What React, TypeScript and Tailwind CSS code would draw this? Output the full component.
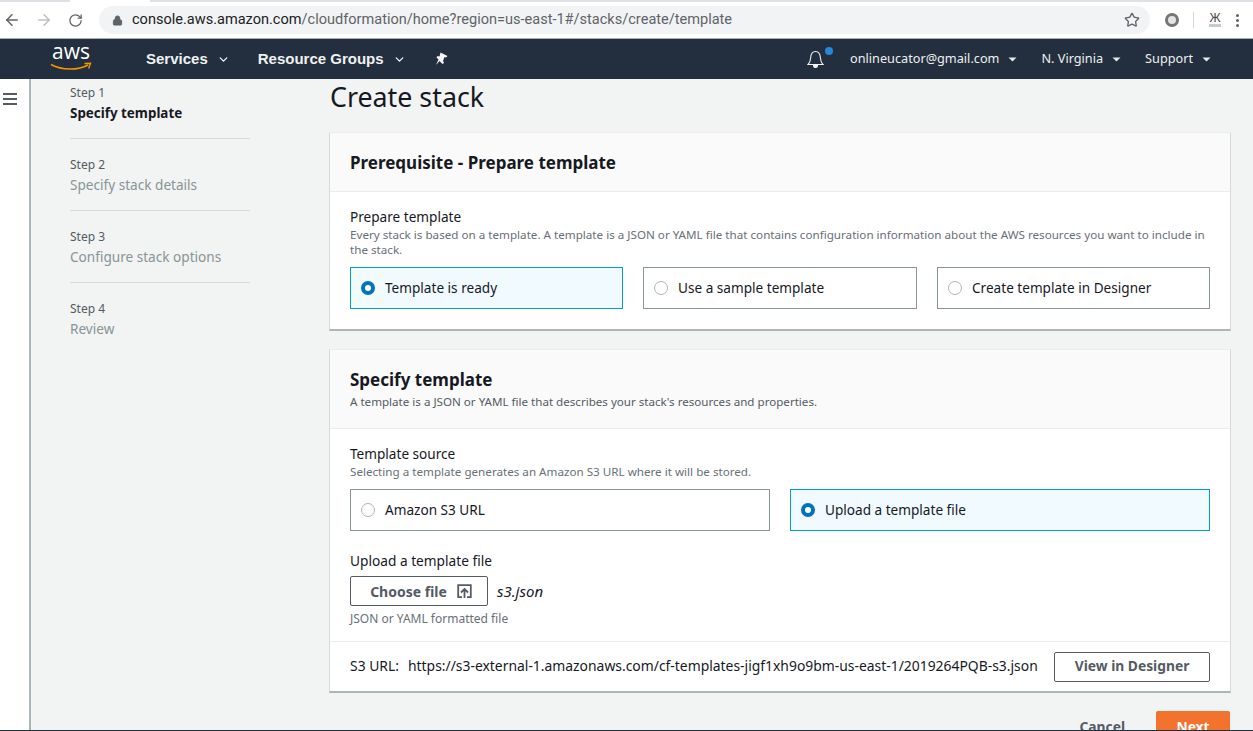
import React from 'react'
import { ChevronDown, Lock, Star, ArrowLeft, ArrowRight, RotateCw } from 'lucide-react'

const font = "font-['Noto_Sans',sans-serif]"

const steps = [
  { step: 'Step 1', title: 'Specify template', active: true },
  { step: 'Step 2', title: 'Specify stack details', active: false },
  { step: 'Step 3', title: 'Configure stack options', active: false },
  { step: 'Step 4', title: 'Review', active: false },
]

const Caret = () => (
  <svg width="9" height="5" viewBox="0 0 9 5" className="ml-[9px] mt-[1px]">
    <path d="M0.5 0.5h8L4.5 4.5z" fill="#e8eaea" />
  </svg>
)

const AwsLogo = () => (
  <div className="relative w-[42px] h-[30px]">
    <div className="absolute left-0 top-[-6px] w-[42px] text-center text-[21px] leading-[26px] text-white font-['Open_Sans',sans-serif]">aws</div>
    <svg width="42" height="10" viewBox="0 0 42 10" className="absolute left-0 top-[18px]" fill="none">
      <path d="M1 2.5C12 8.5 28 8.5 38 3" stroke="#f79400" strokeWidth="1.6" />
      <path d="M34.5 1.5L40.5 1.2L38.6 6.5" stroke="#f79400" strokeWidth="1.4" />
    </svg>
  </div>
)

const BrowserBar = () => (
  <div className="h-[38px] bg-white flex flex-col shrink-0">
    <div className="h-[2px] bg-[#dee1e6] flex">
      <div className="ml-[70px] w-[80px] h-[2px] bg-white" />
    </div>
    <div className="flex items-center h-[36px]">
      <ArrowLeft size={18} color="#5f6368" className="ml-[3px]" />
      <ArrowRight size={18} color="#bdc1c6" className="ml-[14px]" />
      <RotateCw size={15} color="#5f6368" className="ml-[15px]" />
      <div className="ml-[16px] w-[1051px] h-[28px] bg-[#f1f3f4] rounded-full flex items-center pl-[13px] pr-[10px] font-['Roboto',sans-serif] text-[14.55px]">
        <Lock size={11} color="#5f6368" fill="#5f6368" />
        <span className="ml-[9px] text-[#202124]">console.aws.amazon.com</span>
        <span className="text-[#5f6368]">/cloudformation/home?region=us-east-1#/stacks/create/template</span>
        <Star size={16} color="#5f6368" className="ml-auto" />
      </div>
      <div className="ml-[15px] w-[14px] h-[14px] rounded-full bg-[#e4e4e4] border-[3px] border-[#767676] shrink-0" />
      <div className="ml-[14px] w-px h-[16px] bg-[#d5d7da] shrink-0" />
      <div className="ml-[15px] w-[12px] flex flex-col items-center shrink-0">
        <div className="text-[12px] leading-[11px] text-[#444] font-['Liberation_Sans',sans-serif]">Ж</div>
        <div className="w-[12px] h-[3px] bg-[#c9cbcb]" />
      </div>
      <div className="ml-[15px] flex flex-col gap-[2px] shrink-0">
        <div className="w-[3px] h-[3px] rounded-full bg-[#5f6368]" />
        <div className="w-[3px] h-[3px] rounded-full bg-[#5f6368]" />
        <div className="w-[3px] h-[3px] rounded-full bg-[#5f6368]" />
      </div>
    </div>
  </div>
)

const NavBar = () => (
  <div className="h-[41px] bg-[#232f3e] border-t border-[#a9adb2] flex items-center shrink-0">
    <div className="ml-[50px]"><AwsLogo /></div>
    <div className="ml-[54px] flex items-center font-['Liberation_Sans',sans-serif] font-bold text-[15px] text-[#f0f1f1]">
      <span>Services</span>
      <ChevronDown size={13} strokeWidth={2.5} className="ml-[9px]" />
      <span className="ml-[28px]">Resource Groups</span>
      <ChevronDown size={13} strokeWidth={2.5} className="ml-[9px]" />
      <svg width="13" height="14" viewBox="0 0 13 14" className="ml-[29px]">
        <path d="M5.5 0.5L12.5 4L11 5.5L9.5 5L8 9L9 11L7.5 12L4.5 9L1 13L3.5 7.5L1.5 5.5L2.5 4L4.5 4.5z" fill="#f4f5f5" />
      </svg>
    </div>
    <div className={`ml-auto flex items-center text-[12.7px] text-[#eef0f0] ${font}`}>
      <div className="relative w-[17px] h-[18px]">
        <svg width="17" height="18" viewBox="0 0 17 18" fill="none" stroke="#f2f3f3" strokeWidth="1.1">
          <path d="M1 14.5h15c-2-2-2.4-3.5-2.6-6.5C13.2 4.5 11.5 1.5 8.5 1.5S3.8 4.5 3.6 8C3.4 11 3 12.5 1 14.5z" />
          <path d="M6.5 15.5a2 2 0 0 0 4 0z" fill="#f2f3f3" />
        </svg>
        <div className="absolute right-[-9px] top-[-3px] w-[8px] h-[8px] rounded-full bg-[#2a86d8]" />
      </div>
      <span className="ml-[26px]">onlineucator@gmail.com</span>
      <Caret />
      <span className="ml-[24px]">N. Virginia</span>
      <Caret />
      <span className="ml-[24px]">Support</span>
      <span className="mr-[42px] flex"><Caret /></span>
    </div>
  </div>
)

const Sidebar = () => (
  <div className="w-[31px] bg-white border-r-[2px] border-[#aab7b8] shrink-0 pl-[3px] pt-[14px] flex flex-col gap-[3px]">
    <div className="w-[14px] h-[2px] bg-[#545b64]" />
    <div className="w-[14px] h-[2px] bg-[#545b64]" />
    <div className="w-[14px] h-[2px] bg-[#545b64]" />
  </div>
)

const Steps = () => (
  <div className="w-[180px] ml-[39px] shrink-0 pt-[6px]">
    {steps.map((s, i) => (
      <div key={s.step} className={i === 0 ? '' : 'mt-[18px]'}>
        <div className="text-[12px] leading-[16px] text-[#545b64]">{s.step}</div>
        <div className={`leading-[20px] mt-[2px] ${s.active ? 'text-[13.4px] font-bold text-[#16191f]' : 'text-[13.6px] text-[#879596]'}`}>{s.title}</div>
        {i < steps.length - 1 && <div className="h-px bg-[#d5dbdb] mt-[15px]" />}
      </div>
    ))}
  </div>
)

const RadioTile = ({ label, selected, className }: { label: string; selected?: boolean; className: string }) => (
  <div className={`h-[42px] border flex items-center pl-[10px] ${selected ? 'border-[#00a1c9] bg-[#f1faff]' : 'border-[#879596] bg-white'} ${className}`}>
    {selected ? (
      <div className="w-[14px] h-[14px] rounded-full border-[4px] border-[#0073bb] bg-white shrink-0" />
    ) : (
      <div className="w-[14px] h-[14px] rounded-full border border-[#aab7b8] bg-white shrink-0" />
    )}
    <span className="ml-[10px] text-[13.6px] text-[#16191f]">{label}</span>
  </div>
)

const OutlineButton = ({ children, className }: { children: React.ReactNode; className: string }) => (
  <div className={`h-[30px] border border-[#545b64] rounded-[2px] bg-white flex items-center justify-center font-bold text-[#545b64] shrink-0 ${className}`}>
    {children}
  </div>
)

const Card = ({ children }: { children: React.ReactNode }) => (
  <div className="bg-white border-t border-[#eaeded] border-l border-l-[#d5dbdb] border-r border-r-[#d5dbdb] border-b-[2px] border-b-[#aab7b8]">
    {children}
  </div>
)

export default function App() {
  return (
    <div className={`w-[1253px] h-[731px] overflow-hidden flex flex-col bg-[#f2f3f3] relative ${font}`}>
      <BrowserBar />
      <NavBar />
      <div className="flex flex-1 min-h-0">
        <Sidebar />
        <Steps />
        <div className="ml-[79px] w-[902px] shrink-0">
          <h1 className="pl-[1px] text-[26.8px] leading-[36px] text-[#16191f]">Create stack</h1>
          <div className="mt-[17px]">
            <Card>
              <div className="h-[59px] bg-[#fafafa] border-b border-[#eaeded] flex items-center px-[20px] pt-[2px] text-[17px] font-bold text-[#16191f]">
                Prerequisite - Prepare template
              </div>
              <div className="px-[20px] pt-[16px] pb-[20px]">
                <div className="text-[13.6px] leading-[18px] text-[#16191f]">Prepare template</div>
                <div className="text-[11.65px] leading-[15px] text-[#687078] mt-[1px]">
                  Every stack is based on a template. A template is a JSON or YAML file that contains configuration information about the AWS resources you want to include in the stack.
                </div>
                <div className="flex gap-[20px] mt-[10px]">
                  <RadioTile label="Template is ready" selected className="w-[273px]" />
                  <RadioTile label="Use a sample template" className="w-[274px]" />
                  <RadioTile label="Create template in Designer" className="w-[273px]" />
                </div>
              </div>
            </Card>
          </div>
          <div className="mt-[18px]">
            <Card>
              <div className="h-[79px] bg-[#fafafa] border-b border-[#eaeded] px-[20px] pt-[18px]">
                <div className="text-[17px] leading-[24px] font-bold text-[#16191f]">Specify template</div>
                <div className="text-[11.6px] leading-[16px] text-[#545b64] mt-[2px]">A template is a JSON or YAML file that describes your stack's resources and properties.</div>
              </div>
              <div className="px-[20px] pt-[16px]">
                <div className="text-[13.6px] leading-[18px] text-[#16191f]">Template source</div>
                <div className="text-[11.65px] leading-[15px] text-[#687078] mt-[1px]">Selecting a template generates an Amazon S3 URL where it will be stored.</div>
                <div className="flex gap-[20px] mt-[10px]">
                  <RadioTile label="Amazon S3 URL" className="w-[420px]" />
                  <RadioTile label="Upload a template file" selected className="w-[420px]" />
                </div>
                <div className="text-[13.7px] leading-[18px] text-[#16191f] mt-[21px]">Upload a template file</div>
                <div className="flex items-center mt-[6px]">
                  <OutlineButton className="w-[138px] pl-[4px] text-[14px]">
                    Choose file
                    <svg width="15" height="15" viewBox="0 0 15 15" className="ml-[10px]" fill="none" stroke="#545b64" strokeWidth="1.8">
                      <path d="M5 13.2H1.2V1.2h12.6v12H10" />
                      <path d="M7.5 14V5M4 8.5l3.5-3.5L11 8.5" />
                    </svg>
                  </OutlineButton>
                  <span className="ml-[9px] text-[15px] italic text-[#16191f]">s3.json</span>
                </div>
                <div className="text-[12px] leading-[16px] text-[#687078] mt-[5px]">JSON or YAML formatted file</div>
              </div>
              <div className="h-[50px] border-t border-[#eaeded] mt-[14px] flex items-center px-[20px] text-[13.9px] text-[#16191f]">
                <span>S3 URL:</span>
                <span className="ml-[9px]">https://s3-external-1.amazonaws.com/cf-templates-jigf1xh9o9bm-us-east-1/2019264PQB-s3.json</span>
                <OutlineButton className="w-[156px] ml-auto text-[13.8px]">View in Designer</OutlineButton>
              </div>
            </Card>
          </div>
          <div className="flex justify-end items-start mt-[18px] pr-[1px]">
            <span className="text-[13.8px] font-bold text-[#545b64] mt-[6px] mr-[31px]">Cancel</span>
            <div className="w-[74px] h-[32px] bg-[#f2722e] rounded-[2px] flex items-center justify-center text-[13.8px] font-bold text-white">Next</div>
          </div>
        </div>
      </div>
      <div className="absolute left-0 right-0 bottom-0 h-px bg-[#232f3e]" />
    </div>
  )
}
